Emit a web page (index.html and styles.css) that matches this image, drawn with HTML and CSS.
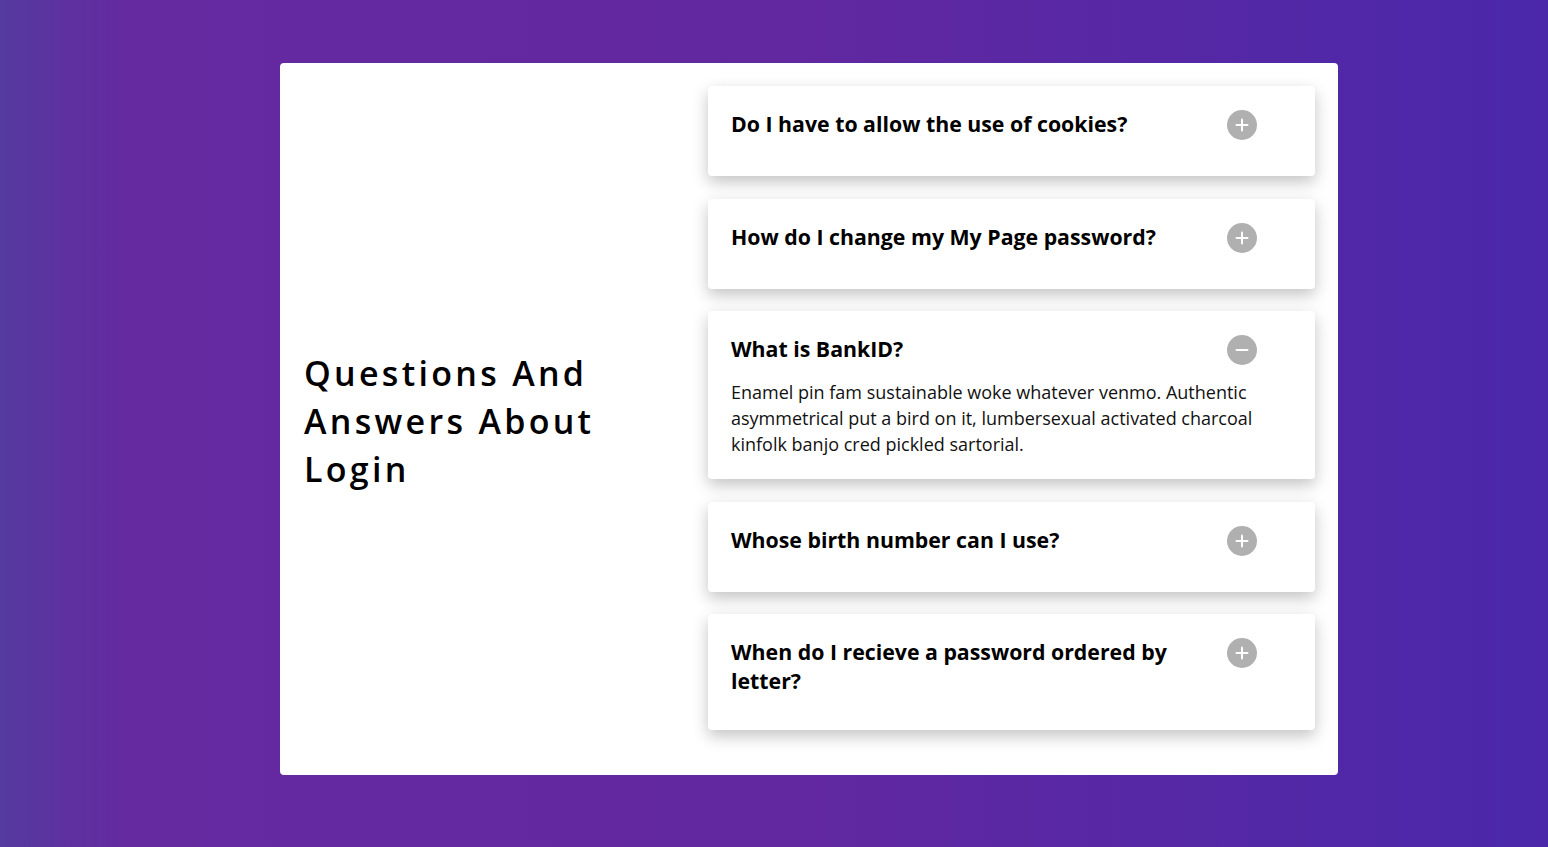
FILE: index.html
```html
<!DOCTYPE html>
<html lang="en">
<head>
<meta charset="utf-8">
<title>FAQ</title>
<link rel="stylesheet" href="styles.css">
</head>
<body>
<main class="panel">
  <div class="intro">
    <h1 class="title">Questions And Answers About Login</h1>
  </div>
  <div class="faq">
    <section class="item">
      <div class="question">
        <h2 class="q-text">Do I have to allow the use of cookies?</h2>
        <span class="toggle plus"></span>
      </div>
    </section>
    <section class="item">
      <div class="question">
        <h2 class="q-text">How do I change my My Page password?</h2>
        <span class="toggle plus"></span>
      </div>
    </section>
    <section class="item open">
      <div class="question">
        <h2 class="q-text">What is BankID?</h2>
        <span class="toggle minus"></span>
      </div>
      <p class="answer">Enamel pin fam sustainable woke whatever venmo. Authentic asymmetrical put a bird on it, lumbersexual activated charcoal kinfolk banjo cred pickled sartorial.</p>
    </section>
    <section class="item">
      <div class="question">
        <h2 class="q-text">Whose birth number can I use?</h2>
        <span class="toggle plus"></span>
      </div>
    </section>
    <section class="item">
      <div class="question">
        <h2 class="q-text narrow">When do I recieve a password ordered by letter?</h2>
        <span class="toggle plus"></span>
      </div>
    </section>
  </div>
</main>
</body>
</html>
```

FILE: styles.css
```css
* { box-sizing: border-box; }
html, body { height: 100%; }
body {
  margin: 0;
  min-height: 847px;
  background: linear-gradient(90deg, #553a9f 0%, #6529a0 8.5%, #6228a0 50%, #4a28aa 100%);
  font-family: "Open Sans", "Noto Sans", sans-serif;
  padding: 63px 0 0 280px;
}
.panel {
  width: 1058px;
  background: #fff;
  border-radius: 4px;
  display: grid;
  grid-template-columns: 404px 607px;
  padding: 23px 23px 22.5px 24px;
}
.intro {
  align-self: center;
  padding-top: 4px;
}
.title {
  margin: 0;
  font-size: 34px;
  font-weight: 600;
  line-height: 48px;
  letter-spacing: 3.3px;
  color: #000;
  width: 330px;
}
.faq {
  display: flex;
  flex-direction: column;
}
.item {
  background: #fff;
  border-radius: 4px;
  box-shadow: 0 6px 16px rgba(0, 0, 0, 0.24);
  padding: 23px 58px 22px 23px;
  margin-bottom: 22.5px;
}
.question {
  display: flex;
  align-items: flex-start;
  justify-content: space-between;
  gap: 20px;
  margin-bottom: 13px;
}
.q-text {
  margin: 0;
  font-size: 21.3px;
  font-weight: 700;
  line-height: 29px;
  color: #000;
  letter-spacing: 0;
}
.q-text.narrow { max-width: 450px; }
.toggle {
  position: relative;
  flex: 0 0 30px;
  width: 30px;
  height: 30px;
  border-radius: 50%;
  background: #b0b0b0;
  margin: 1px 0;
}
.toggle::before,
.toggle::after {
  content: "";
  position: absolute;
  left: 50%;
  top: 50%;
  background: #fff;
  border-radius: 1px;
}
.toggle::before {
  width: 13px;
  height: 2px;
  transform: translate(-50%, -50%);
}
.plus::after {
  width: 2px;
  height: 13px;
  transform: translate(-50%, -50%);
}
.minus::after { display: none; }
.answer {
  margin: 0;
  font-size: 18px;
  line-height: 26px;
  color: #111;
  letter-spacing: 0;
}
```
